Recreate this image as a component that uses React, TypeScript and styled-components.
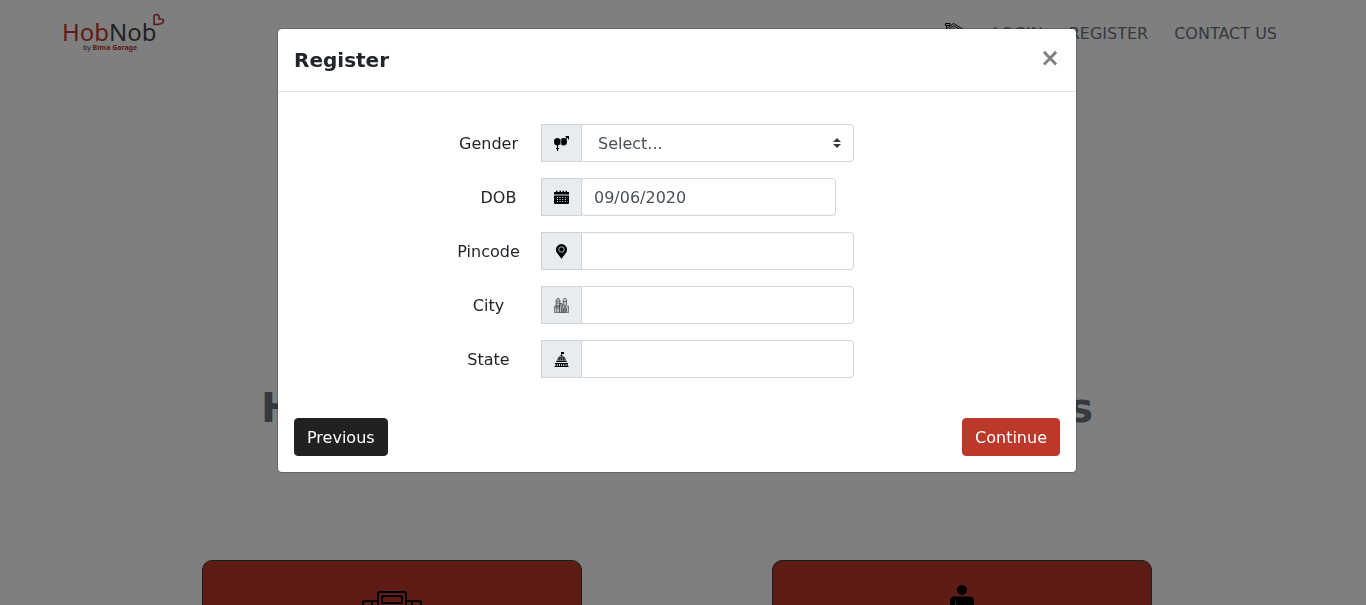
import React, { useState } from "react";
import type { ReactNode } from "react";
import styled, { createGlobalStyle } from "styled-components";

const brand = "#bb382b";
const line = "#ced4da";
const muted = "#6c737a";

const GlobalStyle = createGlobalStyle`
  *, *::before, *::after { box-sizing: border-box; }
  body {
    margin: 0;
    background: #fff;
    color: #212529;
    font: 16px/24px "DejaVu Sans", sans-serif;
    overflow: hidden;
  }
`;

const Page = styled.div`
  padding-right: 12px;
`;

const TopBar = styled.header`
  display: flex;
  align-items: center;
  justify-content: space-between;
  height: 68px;
  padding: 0 77px 0 62px;
`;

const LogoLink = styled.a`
  display: block;
  height: 44px;
`;

const Nav = styled.nav`
  display: flex;
  align-items: center;
  gap: 26px;
`;

const NavLink = styled.a`
  display: block;
  color: ${muted};
  text-decoration: none;

  svg { display: block; }
`;

const Headline = styled.h1`
  margin: 316px 0 128px;
  color: ${muted};
  font-size: 40px;
  line-height: 48px;
  text-align: center;
  white-space: nowrap;
`;

const Cards = styled.section`
  display: flex;
  justify-content: center;
  gap: 190px;
`;

const Card = styled.article`
  display: flex;
  flex: 0 1 380px;
  justify-content: center;
  height: 240px;
  padding-top: 24px;
  border: 1px solid #343a40;
  border-radius: 10px;
  background: ${brand};
`;

const Backdrop = styled.div`
  position: fixed;
  inset: 0;
  padding: 28px 12px 28px 0;
  background: rgba(0, 0, 0, 0.5);
`;

const Dialog = styled.section`
  max-width: 800px;
  margin: 0 auto;
  border: 1px solid rgba(0, 0, 0, 0.2);
  border-radius: 5px;
  background: #fff;
  background-clip: padding-box;
`;

const DialogHeader = styled.header`
  display: flex;
  align-items: flex-start;
  justify-content: space-between;
  padding: 16px;
  border-bottom: 1px solid #dee2e6;
`;

const DialogTitle = styled.h2`
  margin: 0;
  font-size: 20px;
  line-height: 30px;
`;

const CloseButton = styled.button`
  margin: -16px;
  padding: 17px 16px 15px;
  border: 0;
  background: transparent;
  color: #7f7f7f;
  font: bold 24px/24px "DejaVu Sans", sans-serif;
  cursor: pointer;
`;

const Fields = styled.div`
  display: grid;
  gap: 16px;
  padding: 32px 16px 16px 158px;
`;

const Row = styled.div<{ $narrow?: boolean }>`
  display: grid;
  grid-template-columns: 105px minmax(0, ${(p) => (p.$narrow ? 295 : 313)}px);
  align-items: center;

  label {
    padding: 2px 0 0 ${(p) => (p.$narrow ? 20 : 0)}px;
    text-align: center;
  }
`;

const InputGroup = styled.div`
  position: relative;
  display: flex;
  height: 38px;
`;

const Addon = styled.span`
  display: flex;
  flex: none;
  align-items: center;
  justify-content: center;
  width: 41px;
  margin-right: -1px;
  border: 1px solid ${line};
  background: #e9ecef;
`;

const TextInput = styled.input<{ $rounded?: boolean }>`
  flex: 1;
  min-width: 0;
  padding: 7px 12px 5px;
  border: 1px solid ${line};
  border-radius: ${(p) => (p.$rounded ? "4px" : "0 4px 4px 0")};
  background: #fff;
  color: #495057;
  font: inherit;
`;

const Select = styled.select`
  flex: 1;
  min-width: 0;
  padding: 7px 28px 5px 16px;
  border: 1px solid ${line};
  border-radius: 0 4px 4px 0;
  appearance: none;
  background: #fff;
  color: #495057;
  font: inherit;
`;

const Caret = styled.svg`
  position: absolute;
  top: 14px;
  right: 13px;
  pointer-events: none;
`;

const DialogFooter = styled.footer`
  display: flex;
  justify-content: space-between;
  padding: 24px 16px 16px;
`;

const Button = styled.button<{ $primary?: boolean }>`
  padding: 7px 12px 5px;
  border: 1px solid ${(p) => (p.$primary ? brand : "#212121")};
  border-radius: 4px;
  background: ${(p) => (p.$primary ? brand : "#212121")};
  color: #fff;
  font: inherit;
  cursor: pointer;
`;

const Logo = () => (
  <svg width="104" height="44" viewBox="0 0 104 44" role="img" aria-label="HobNob by Bima Garage">
    <text x="0" y="29" fontFamily="Noto Sans, sans-serif" fontSize="24" fill={brand}>
      Hob<tspan fill="#444">Nob</tspan>
    </text>
    <text x="21" y="38" fontFamily="Noto Sans, sans-serif" fontSize="7" fill="#444">
      by <tspan fill={brand} fontWeight="bold">Bima Garage</tspan>
    </text>
    <path
      d="M92 12.500V5q0-2.500 2.500-2.500T97 5v2h2q2.500 0 2.500 2 0 1.700-2.500 2.700-2 .8-7 .8z"
      fill="none"
      stroke={brand}
      strokeWidth="1.600"
    />
  </svg>
);

const HomeIcon = () => (
  <svg width="24" height="24" viewBox="0 0 24 24" fill="none" stroke="#000" strokeWidth="1">
    <path d="M3.500 6.500V3.500M2.500 1.500h4.500v2H2.500zM6.500 3.500v1M-.5 9.500 10.500 1.500 22 8.500v2L10.500 3.800 0 11.500z" />
    <path d="M3 12l7.500-5.500 8.500 5.500M4.500 13v10h15V13M9 23v-8h6v8" />
  </svg>
);

const GarageIcon = () => (
  <svg width="60" height="60" viewBox="0 0 60 60" fill="none" stroke="#000" strokeWidth="2">
    <path d="M16 30V9q0-2 2-2h24q2 0 2 2v21M1 50V18q0-2 2-2h13M44 16h13q2 0 2 2v32M10 16v30M50 16v30" />
    <rect x="20" y="11" width="20" height="7" rx="1" />
    <path d="M16 30h28M1 50h58" />
  </svg>
);

const PersonIcon = () => (
  <svg width="60" height="60" viewBox="0 0 60 60" fill="#000">
    <circle cx="30" cy="5" r="5" />
    <path d="M23 11.500h14q5 0 5 5V34h-4v24h-7V36h-2v22h-7V34h-4V16.500q0-5 5-5z" />
    <path d="M23.500 17v12" stroke={brand} strokeWidth="1" />
  </svg>
);

const GenderIcon = () => (
  <svg width="15" height="15" viewBox="0 0 15 15">
    <ellipse cx="3.300" cy="5.800" rx="3.300" ry="3.700" />
    <ellipse cx="9.500" cy="5.800" rx="3.500" ry="3.700" />
    <path d="M7.200 3.300q-1.300 2.500 0 5" fill="none" stroke="#c8cbce" strokeWidth=".8" />
    <path d="M3.500 9v6M2 12.500h3M11.500 3.500 14 1M11.500.6h3v3" fill="none" stroke="#000" strokeWidth="1.100" />
  </svg>
);

const CalendarIcon = () => (
  <svg width="15" height="15" viewBox="0 0 15 15">
    <path d="M0 2h2V.8h1.500V2h2V.8H7V2h1.500V.8H10V2h1.500V.8H13V2h2v2.600H0zM0 5.400h15V13q0 1-1 1H1q-1 0-1-1z" />
    <path d="M3 7.500h9.500M3 9.500h9.500M3 11.500h9.500" stroke="#e9ecef" strokeWidth="1" strokeDasharray="1 1.600" />
  </svg>
);

const PinIcon = () => (
  <svg width="15" height="15" viewBox="0 0 15 15">
    <path d="M7.500 0a5.600 5.600 0 0 0-5.600 5.600C1.900 9 5 11 7.500 15c2.500-4 5.600-6 5.600-9.400A5.600 5.600 0 0 0 7.500 0z" />
    <circle cx="7.500" cy="5.500" r="2.700" fill="none" stroke="#c8cbce" strokeWidth=".9" />
  </svg>
);

const CityIcon = () => (
  <svg width="15" height="15" viewBox="0 0 15 15" fill="#c3c6c8" stroke="#333" strokeWidth=".6">
    <path d="M2 8V2.500L3 .5h2l1 2V8zM9.200 7V1.500L10 .5h1.700l.8 1V7M.4 8h5.200v6.600H.4zM5.600 5.500h2.400v9H5.600zM8 7h3v7.500H8zM11 8h3.600v6.600H11z" />
    <path d="M2 3h4M2 5h4M9 3.500h3.500M.4 10h5M2.800 8v6.600M9.500 10v4.500M12.500 10v4" />
  </svg>
);

const StateIcon = () => (
  <svg width="15" height="15" viewBox="0 0 15 15">
    <path d="M7 0h3v2H7.800v1.200q1.500.2 2.200 1.300H5Q5.700 3.400 7 3.200zM4 5.200h7v1.300H4zM2.300 8.700h10.400V10H2.300zM1 11h13v1H1zM.4 14h14.200v1H.4z" />
    <path d="M3.500 7.500h8" stroke="#000" strokeWidth="2" strokeDasharray="1.200 .5" />
    <path d="M1.500 13h12.200" stroke="#000" strokeWidth="2" strokeDasharray="1.300 .9" />
  </svg>
);

interface FieldProps {
  id: string;
  label: string;
  icon: ReactNode;
  narrow?: boolean;
  children: ReactNode;
}

const Field = ({ id, label, icon, narrow, children }: FieldProps) => (
  <Row $narrow={narrow}>
    <label htmlFor={id}>{label}</label>
    <InputGroup>
      <Addon aria-hidden="true">{icon}</Addon>
      {children}
    </InputGroup>
  </Row>
);

export default function App() {
  const [dob, setDob] = useState("09/06/2020");

  return (
    <>
      <GlobalStyle />
      <Page>
        <TopBar>
          <LogoLink href="#home"><Logo /></LogoLink>
          <Nav>
            <NavLink href="#home" aria-label="Home"><HomeIcon /></NavLink>
            <NavLink href="#login">LOGIN</NavLink>
            <NavLink href="#register">REGISTER</NavLink>
            <NavLink href="#contact">CONTACT US</NavLink>
          </Nav>
        </TopBar>
        <main>
          <Headline>How HobNob Works With Car Drivers</Headline>
          <Cards>
            <Card><GarageIcon /></Card>
            <Card><PersonIcon /></Card>
          </Cards>
        </main>
      </Page>
      <Backdrop>
        <Dialog role="dialog" aria-modal="true" aria-labelledby="register-title">
          <DialogHeader>
            <DialogTitle id="register-title">Register</DialogTitle>
            <CloseButton type="button" aria-label="Close">×</CloseButton>
          </DialogHeader>
          <form onSubmit={(e) => e.preventDefault()}>
            <Fields>
              <Field id="gender" label="Gender" icon={<GenderIcon />}>
                <Select id="gender" defaultValue="">
                  <option value="">Select...</option>
                  <option>Male</option>
                  <option>Female</option>
                </Select>
                <Caret width="8" height="10" viewBox="0 0 8 10" fill="#343a40">
                  <path d="M4 0 0 4h8zM4 10 0 6h8z" />
                </Caret>
              </Field>
              <Field id="dob" label="DOB" icon={<CalendarIcon />} narrow>
                <TextInput id="dob" $rounded value={dob} onChange={(e) => setDob(e.target.value)} />
              </Field>
              <Field id="pincode" label="Pincode" icon={<PinIcon />}>
                <TextInput id="pincode" />
              </Field>
              <Field id="city" label="City" icon={<CityIcon />}>
                <TextInput id="city" />
              </Field>
              <Field id="state" label="State" icon={<StateIcon />}>
                <TextInput id="state" />
              </Field>
            </Fields>
            <DialogFooter>
              <Button type="button">Previous</Button>
              <Button type="submit" $primary>Continue</Button>
            </DialogFooter>
          </form>
        </Dialog>
      </Backdrop>
    </>
  );
}
